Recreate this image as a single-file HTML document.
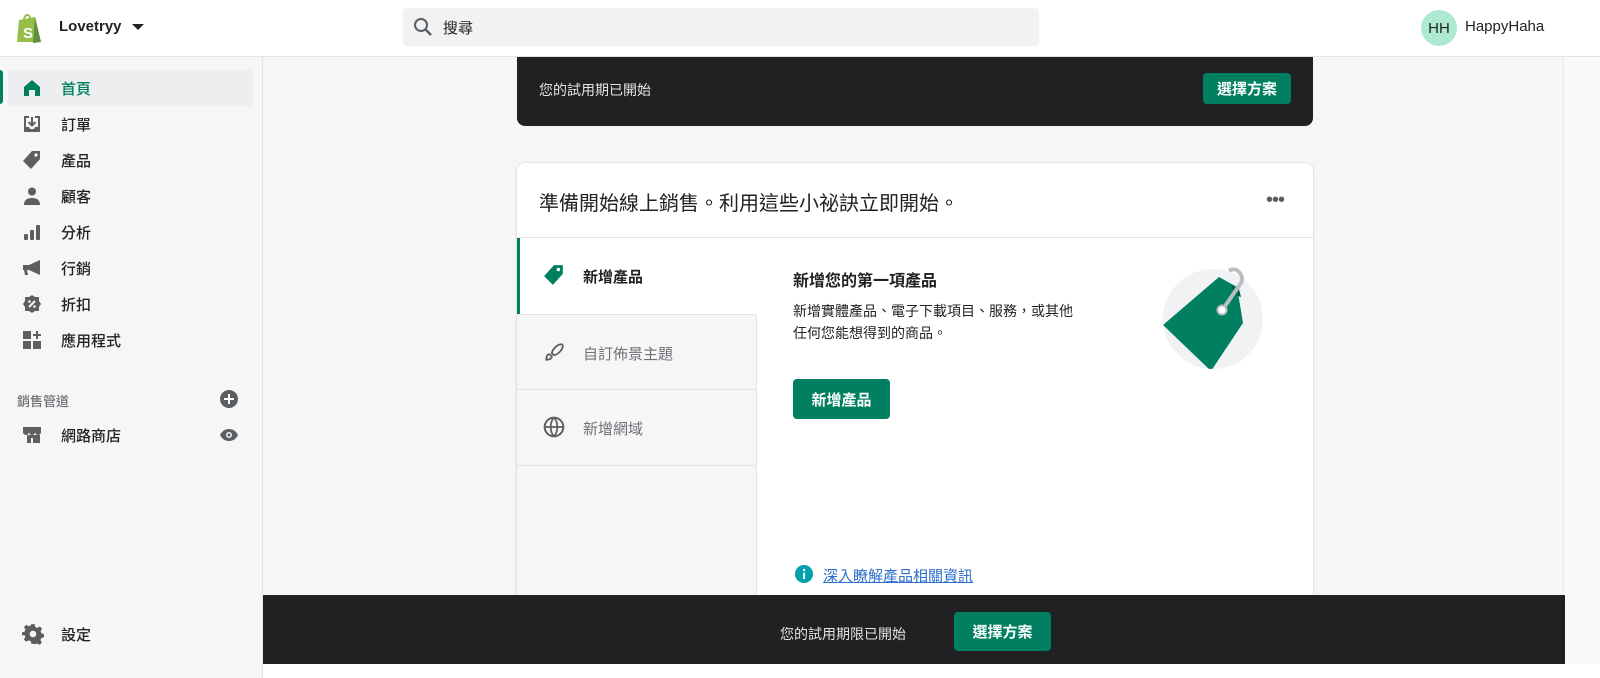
<!DOCTYPE html>
<html><head><meta charset="utf-8"><style>
*{box-sizing:border-box;margin:0;padding:0}
body{width:1600px;height:678px;overflow:hidden;background:#f6f6f7;font-family:"Liberation Sans","Noto Sans CJK TC",sans-serif;color:#202223;position:relative}
.top{position:absolute;left:0;top:0;width:1600px;height:57px;background:#fff;border-bottom:1px solid #e1e3e5}
.side{position:absolute;left:0;top:57px;width:263px;height:621px;background:#f6f6f7;border-right:1px solid #e1e3e5}
.nav{position:absolute;left:8px;width:245px;height:36px;display:flex;align-items:center;font-size:15px;font-weight:500;color:#202223}
.nav svg{position:absolute;left:14px}
.nav span{position:absolute;left:53px}
.banner{position:absolute;left:517px;top:57px;width:796px;height:69px;background:#202123;border-radius:0 0 8px 8px;color:#e3e3e3;font-size:14px}
.btn{position:absolute;background:#008060;color:#fff;font-weight:700;border-radius:4px;display:flex;align-items:center;justify-content:center}
.card{position:absolute;left:517px;top:163px;width:796px;height:440px;background:#fff;border-radius:8px;box-shadow:0 0 0 1px rgba(63,63,68,.05),0 1px 3px rgba(63,63,68,.15)}
.tab{position:absolute;left:0;width:240px;height:76px;border-bottom:1px solid #e1e3e5;background:#f6f6f7;border-right:1px solid #e1e3e5;font-size:15px;color:#6d7175}
.tab span{position:absolute;left:66px;top:28px}
.tab svg{position:absolute;left:26px;top:26px}
.bottom{position:absolute;left:263px;top:595px;width:1302px;height:69px;background:#202123;color:#e3e3e3;font-size:14px}
</style></head><body>
<div class="top">
<svg style="position:absolute;left:15px;top:12px" width="28" height="32" viewBox="0 0 28 32"><path d="M4 8 L20 5 L26 30 L2 30 Z" fill="#95bf47"/><path d="M20 5 L26 30 L18 31 Z" fill="#5e8e3e"/><path d="M9 8 C9 2 15 1 15 7" stroke="#95bf47" stroke-width="2" fill="none"/><text x="8" y="26" font-size="15" font-weight="700" fill="#fff" font-family="Liberation Sans">S</text></svg>
<div style="position:absolute;left:59px;top:18px;font-size:15px;font-weight:600">Lovetryy</div>
<div style="position:absolute;left:132px;top:24px;border-left:6px solid transparent;border-right:6px solid transparent;border-top:6px solid #202223"></div>
<div style="position:absolute;left:403px;top:8px;width:636px;height:38px;background:#f1f2f3;border-radius:4px"></div>
<svg style="position:absolute;left:413px;top:17px" width="20" height="20" viewBox="0 0 20 20"><circle cx="8" cy="8" r="6" stroke="#5c5f62" stroke-width="2" fill="none"/><path d="M12.5 12.5 L18 18" stroke="#5c5f62" stroke-width="2.5"/></svg>
<div style="position:absolute;left:443px;top:17px;font-size:15px;color:#202223">搜尋</div>
<div style="position:absolute;left:1421px;top:10px;width:36px;height:36px;border-radius:50%;background:#aee9d1;font-size:15px;display:flex;align-items:center;justify-content:center;color:#202223">HH</div>
<div style="position:absolute;left:1465px;top:18px;font-size:15px">HappyHaha</div>
</div>
<div style="position:absolute;left:1563px;top:57px;width:37px;height:621px;background:#fafafa;border-left:1px solid #e8e8e8"></div>
<div class="side">
<div style="position:absolute;left:0;top:13px;width:3px;height:34px;background:#008060;border-radius:0 3px 3px 0"></div>
<div class="nav" style="top:13px;background:#edeeef;border-radius:4px;color:#008060"><svg width="20" height="20" viewBox="0 0 20 20"><path d="M2 9 L10 2 L18 9 V18 H13 V12 H7 V18 H2Z" fill="#007f5f"/></svg><span>首頁</span></div>
<div class="nav" style="top:49px"><svg width="20" height="20" viewBox="0 0 20 20"><path d="M2 2h5v2H4v9h3l1 2h4l1-2h3V4h-3V2h5v16H2z" fill="#5c5f62"/><path d="M10 3v8M6.5 8l3.5 3.5 3.5-3.5" stroke="#5c5f62" stroke-width="2" fill="none"/></svg><span>訂單</span></div>
<div class="nav" style="top:85px"><svg width="20" height="20" viewBox="0 0 20 20"><path d="M10 1h8v8l-9 10-8-8z" fill="#5c5f62"/><circle cx="14" cy="5" r="1.6" fill="#f6f6f7"/></svg><span>產品</span></div>
<div class="nav" style="top:121px"><svg width="20" height="20" viewBox="0 0 20 20"><circle cx="10" cy="5.5" r="4" fill="#5c5f62"/><path d="M2 19c0-5 3-7 8-7s8 2 8 7z" fill="#5c5f62"/></svg><span>顧客</span></div>
<div class="nav" style="top:157px"><svg width="20" height="20" viewBox="0 0 20 20"><rect x="2" y="12" width="4" height="6" rx="1" fill="#5c5f62"/><rect x="8" y="8" width="4" height="10" rx="1" fill="#5c5f62"/><rect x="14" y="3" width="4" height="15" rx="1" fill="#5c5f62"/></svg><span>分析</span></div>
<div class="nav" style="top:193px"><svg width="20" height="20" viewBox="0 0 20 20"><path d="M1 7h6l11-5v15L7 12H5l1 5H3l-1-5H1z" fill="#5c5f62"/></svg><span>行銷</span></div>
<div class="nav" style="top:229px"><svg width="20" height="20" viewBox="0 0 20 20"><path d="M10 1l3 2h4v4l2 3-2 3v4h-4l-3 2-3-2H3v-4l-2-3 2-3V3h4z" fill="#5c5f62"/><path d="M7 13l6-6" stroke="#f6f6f7" stroke-width="2"/><circle cx="7.5" cy="7.5" r="1.3" fill="#f6f6f7"/><circle cx="12.5" cy="12.5" r="1.3" fill="#f6f6f7"/></svg><span>折扣</span></div>
<div class="nav" style="top:265px"><svg width="20" height="20" viewBox="0 0 20 20"><rect x="1" y="1" width="8" height="8" fill="#5c5f62"/><rect x="1" y="11" width="8" height="8" fill="#5c5f62"/><rect x="11" y="11" width="8" height="8" fill="#5c5f62"/><path d="M15 1v8M11 5h8" stroke="#5c5f62" stroke-width="2"/></svg><span>應用程式</span></div>
<div style="position:absolute;left:17px;top:334px;font-size:13px;color:#6d7175;font-weight:500">銷售管道</div>
<svg style="position:absolute;left:219px;top:332px" width="20" height="20" viewBox="0 0 20 20"><circle cx="10" cy="10" r="9" fill="#5c5f62"/><path d="M10 5v10M5 10h10" stroke="#fff" stroke-width="2"/></svg>
<div class="nav" style="top:360px"><svg width="20" height="20" viewBox="0 0 20 20"><path d="M1 2h18v5a3 3 0 0 1-6 0 3 3 0 0 1-6 0 3 3 0 0 1-6 0z M2 10h3v8h4v-5h2v5h7v-8h1" fill="#5c5f62"/></svg><span>網路商店</span></div>
<svg style="position:absolute;left:219px;top:368px" width="20" height="20" viewBox="0 0 20 20"><path d="M1 10c2-4 5-6 9-6s7 2 9 6c-2 4-5 6-9 6s-7-2-9-6z" fill="#5c5f62"/><circle cx="10" cy="10" r="3" fill="#f6f6f7"/><circle cx="10" cy="10" r="1.5" fill="#5c5f62"/></svg>
<div class="nav" style="top:559px"><svg width="22" height="22" viewBox="0 0 20 20"><path d="M8.5 1h3l.5 2.5 2 1 2.2-1.4 2.1 2.1L16.9 7.4l.8 2 2.3.6v3l-2.4.6-.8 2 1.3 2.2-2.1 2.1-2.2-1.3-2 .8L11.5 19h-3l-.5-2.4-2-.8-2.2 1.3-2.1-2.1 1.3-2.2-.8-2L0 11.5v-3l2.3-.6.8-2L1.8 3.7l2.1-2.1L6 3l2-1z" fill="#5c5f62"/><circle cx="10" cy="10" r="3" fill="#f6f6f7"/></svg><span>設定</span></div>
</div>
<div class="banner"><div style="position:absolute;left:22px;top:23px">您的試用期已開始</div><div class="btn" style="left:686px;top:16px;width:88px;height:31px;font-size:15px">選擇方案</div></div>
<div class="card">
<div style="position:absolute;left:22px;top:24px;font-size:20px">準備開始線上銷售。利用這些小祕訣立即開始。</div>
<div style="position:absolute;left:749px;top:34px;font-size:20px;letter-spacing:-1px;color:#5c5f62;line-height:6px">•••</div>
<div style="position:absolute;left:0;top:74px;width:796px;border-top:1px solid #e1e3e5"></div>
<div class="tab" style="top:75px;background:#fff;border-right:none;border-bottom:none;color:#202223;font-weight:600"><div style="position:absolute;left:0;top:0;width:3px;height:76px;background:#008060"></div><svg width="22" height="22" viewBox="0 0 20 20"><path d="M10 1h8v8l-9 10-8-8z" fill="#007f5f"/><circle cx="14" cy="5" r="1.6" fill="#fff"/></svg><span>新增產品</span></div>
<div class="tab" style="top:151px;border-top:1px solid #e1e3e5"><svg width="22" height="22" viewBox="0 0 20 20"><path d="M17 3c-4 0-8 4-9 8l2 2c4-1 8-5 8-9zM6 12c-2 0-3 2-3 5 3 0 5-1 5-3z" stroke="#5c5f62" stroke-width="1.6" fill="none"/></svg><span>自訂佈景主題</span></div>
<div class="tab" style="top:227px"><svg width="22" height="22" viewBox="0 0 20 20"><circle cx="10" cy="10" r="8.5" stroke="#5c5f62" stroke-width="1.8" fill="none"/><path d="M1.5 10h17M10 1.5c-4 4-4 13 0 17M10 1.5c4 4 4 13 0 17" stroke="#5c5f62" stroke-width="1.6" fill="none"/></svg><span>新增網域</span></div>
<div style="position:absolute;left:0;top:303px;width:240px;height:137px;border-right:1px solid #e1e3e5;background:#f6f6f7"></div>
<div style="position:absolute;left:276px;top:104px;font-size:16px;font-weight:700">新增您的第一項產品</div>
<div style="position:absolute;left:276px;top:137px;font-size:14px;line-height:22px;width:330px">新增實體產品、電子下載項目、服務，或其他<br>任何您能想得到的商品。</div>
<div class="btn" style="left:276px;top:216px;width:97px;height:40px;font-size:15px">新增產品</div>
<svg style="position:absolute;left:644px;top:100px" width="110" height="110" viewBox="0 0 110 110"><defs><clipPath id="c"><circle cx="52" cy="56" r="50"/></clipPath></defs><circle cx="52" cy="56" r="50" fill="#f1f2f3"/><path clip-path="url(#c)" d="M30 38 L58 14 L76 24 L82 60 L50 108 L2 62 Z" fill="#008060"/><path d="M70 22 L78 26 L80 34 L74 32Z" fill="#005e46"/><path d="M62 46 L80 20 C84 14 76 2 68 8" stroke="#babec3" stroke-width="4" fill="none"/><circle cx="61" cy="47" r="4.5" fill="#fff" stroke="#babec3" stroke-width="2"/></svg>
<svg style="position:absolute;left:278px;top:402px" width="18" height="18" viewBox="0 0 20 20"><circle cx="10" cy="10" r="10" fill="#00a0ac"/><rect x="9" y="8.5" width="2.2" height="7" fill="#fff"/><circle cx="10.1" cy="5.5" r="1.4" fill="#fff"/></svg>
<div style="position:absolute;left:306px;top:402px;font-size:15px;color:#2c6ecb;text-decoration:underline">深入瞭解產品相關資訊</div>
</div>
<div class="bottom"><div style="position:absolute;left:517px;top:29px">您的試用期限已開始</div><div class="btn" style="left:691px;top:17px;width:97px;height:39px;font-size:15px">選擇方案</div></div>
<div style="position:absolute;left:263px;top:664px;width:1337px;height:14px;background:#fff"></div>
</body></html>
